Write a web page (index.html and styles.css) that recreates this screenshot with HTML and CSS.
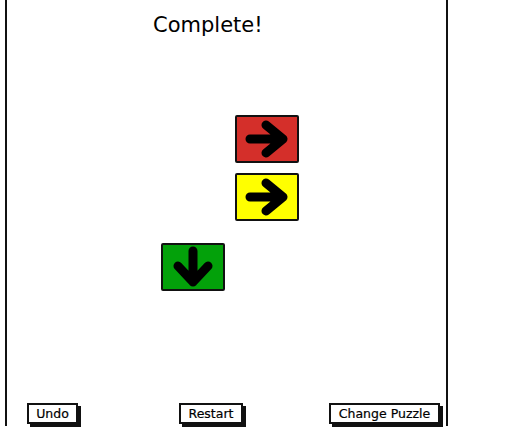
FILE: index.html
```html
<!DOCTYPE html>
<html>
<head>
<meta charset="utf-8">
<link rel="stylesheet" href="styles.css">
</head>
<body>
<div class="frame">
  <h1 class="title">Complete!</h1>
  <div class="board">
    <div class="tile red t1">
      <svg viewBox="0 0 64 48" width="64" height="48"><path d="M15 24 H48 M31 10 L48 24 L31 38" /></svg>
    </div>
    <div class="tile yellow t2">
      <svg viewBox="0 0 64 48" width="64" height="48"><path d="M15 24 H48 M31 10 L48 24 L31 38" /></svg>
    </div>
    <div class="tile green t3">
      <svg viewBox="0 0 64 48" width="64" height="48"><path d="M32 8 V39 M17 23 L32 39 L47 23" /></svg>
    </div>
  </div>
  <div class="actions">
    <button class="btn undo">Undo</button>
    <button class="btn restart">Restart</button>
    <button class="btn change">Change Puzzle</button>
  </div>
</div>
</body>
</html>
```
FILE: styles.css
```css
html, body {
  margin: 0;
  padding: 0;
  background: #fff;
}
body {
  width: 517px;
  height: 428px;
  overflow: hidden;
  font-family: "DejaVu Sans", "Noto Sans", sans-serif;
}
.frame {
  margin-left: 5px;
  width: 439px;
  height: 426px;
  border-left: 2px solid #111;
  border-right: 2px solid #111;
  display: flex;
  flex-direction: column;
}
.title {
  margin: 0;
  padding: 13px 0 0 146px;
  font-size: 21px;
  line-height: 24px;
  font-weight: normal;
  color: #000;
}
.board {
  position: relative;
  flex: 1;
}
.tile {
  position: absolute;
  width: 64px;
  height: 48px;
  box-sizing: border-box;
  border: 2px solid #111;
  border-radius: 2px;
}
.tile svg {
  display: block;
  margin: -2px;
}
.tile path {
  fill: none;
  stroke: #000;
  stroke-width: 9;
  stroke-linecap: round;
  stroke-linejoin: round;
}
.red { background: #d42f2a; }
.yellow { background: #ffff00; }
.green { background: #03a10a; }
.t1 { left: 228px; top: 78px; }
.t2 { left: 228px; top: 136px; }
.t3 { left: 154px; top: 206px; }
.actions {
  display: flex;
  align-items: flex-start;
  padding: 0 0 0 20px;
  height: 23px;
}
.btn {
  box-sizing: border-box;
  height: 21px;
  padding: 0;
  border: 2px solid #111;
  background: #fff;
  box-shadow: 3px 3px 0 #111;
  font-family: "DejaVu Sans", "Noto Sans", sans-serif;
  font-size: 12.5px;
  line-height: 17px;
  color: #000;
  text-align: center;
  -webkit-text-stroke: 0.2px #000;
}
.undo { width: 51px; }
.restart { width: 64px; margin-left: 101px; }
.change { width: 111px; margin-left: 86px; }
```
